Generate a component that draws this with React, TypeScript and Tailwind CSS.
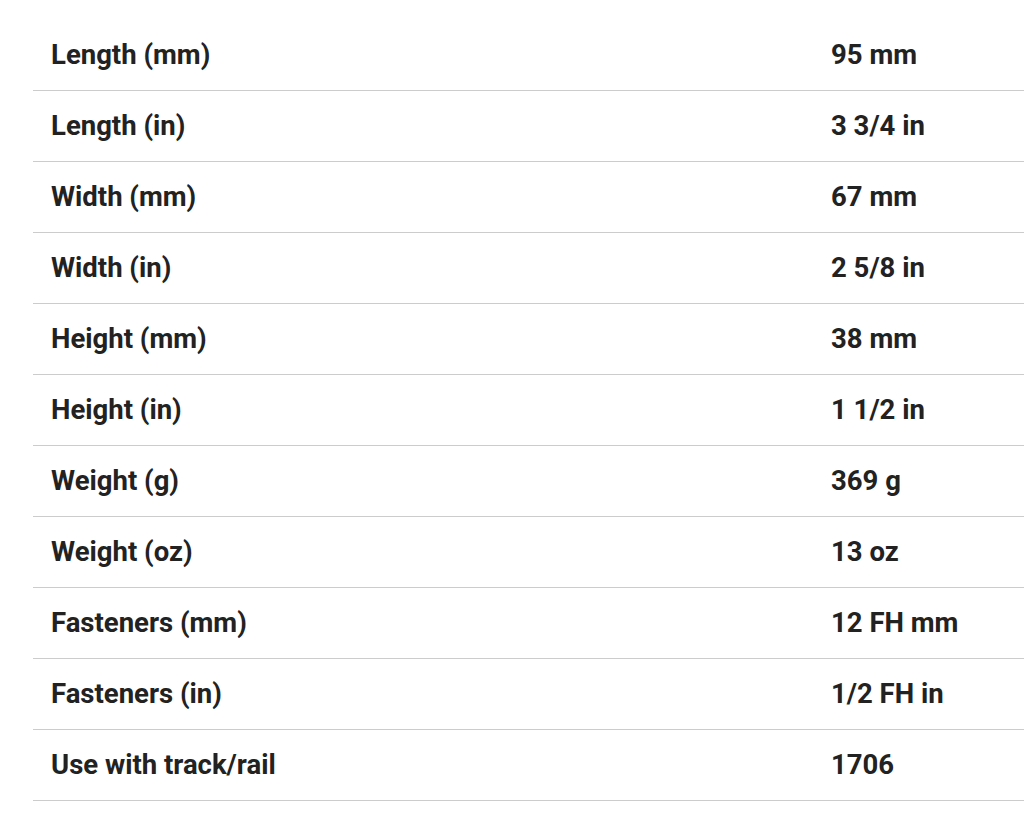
import React from "react";

type Spec = {
  label: string;
  value: string;
};

const specs: Spec[] = [
  { label: "Length (mm)", value: "95 mm" },
  { label: "Length (in)", value: "3 3/4 in" },
  { label: "Width (mm)", value: "67 mm" },
  { label: "Width (in)", value: "2 5/8 in" },
  { label: "Height (mm)", value: "38 mm" },
  { label: "Height (in)", value: "1 1/2 in" },
  { label: "Weight (g)", value: "369 g" },
  { label: "Weight (oz)", value: "13 oz" },
  { label: "Fasteners (mm)", value: "12 FH mm" },
  { label: "Fasteners (in)", value: "1/2 FH in" },
  { label: "Use with track/rail", value: "1706" },
];

const App = () => {
  return (
    <div
      className="min-h-[835px] bg-white pt-5 pl-[33px] overflow-hidden"
      style={{ fontFamily: "Roboto, 'Liberation Sans', sans-serif" }}
    >
      <div className="w-[991px]">
        {specs.map((spec, index) => (
          <div
            key={index}
            className="flex items-center h-[71px] border-b border-[#cccccc] text-[27.5px] font-bold text-[#222222]"
          >
            <div className="w-[780px] pl-[18px]">{spec.label}</div>
            <div className="flex-1 pl-[18px]">{spec.value}</div>
          </div>
        ))}
      </div>
    </div>
  );
};

export default App;
